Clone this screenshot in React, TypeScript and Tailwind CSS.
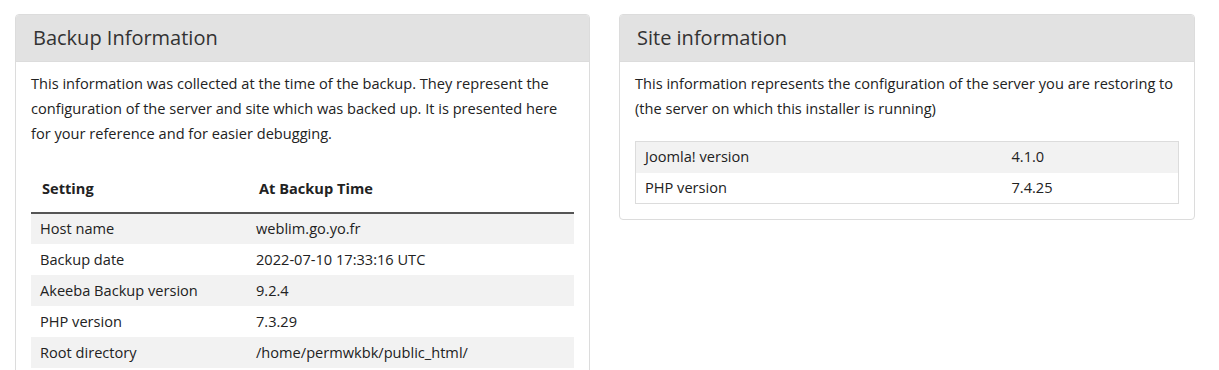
import React from "react";

const backupRows: [string, string][] = [
  ["Host name", "weblim.go.yo.fr"],
  ["Backup date", "2022-07-10 17:33:16 UTC"],
  ["Akeeba Backup version", "9.2.4"],
  ["PHP version", "7.3.29"],
  ["Root directory", "/home/permwkbk/public_html/"],
];

const siteRows: [string, string][] = [
  ["Joomla! version", "4.1.0"],
  ["PHP version", "7.4.25"],
];

const Card: React.FC<{ title: string; children: React.ReactNode }> = ({ title, children }) => (
  <div className="border border-[#dcdcdc] rounded-[4px] bg-white overflow-hidden">
    <div className="bg-[#e2e2e2] h-[47px] flex items-center px-[17px] border-b border-[#dcdcdc]">
      <h3 className="text-[20px] text-[#333] leading-none font-normal">{title}</h3>
    </div>
    <div className="px-[15px] pt-[9px] pb-[15px]">{children}</div>
  </div>
);

export default function App() {
  return (
    <div
      className="w-[1219px] h-[370px] overflow-hidden bg-white text-[#222] pt-[14px] pl-[15px] pr-[24px]"
      style={{ fontFamily: '"Open Sans", sans-serif' }}
    >
      <div className="grid grid-cols-[575px_576px] gap-[29px] items-start">
        {/* Backup Information */}
        <Card title="Backup Information">
          <p className="text-[14.6px] leading-[25px]">
            This information was collected at the time of the backup. They represent the configuration of the
            server and site which was backed up. It is presented here for your reference and for easier debugging.
          </p>
          <table className="w-[543px] mt-[21px] text-[14.6px] border-collapse">
            <thead>
              <tr className="border-b-2 border-[#555]">
                <th className="w-[225px] text-left font-bold pl-[11px] h-[46px] pb-[2px]">Setting</th>
                <th className="text-left font-bold pl-[3px] h-[46px] pb-[2px]">At Backup Time</th>
              </tr>
            </thead>
            <tbody>
              {backupRows.map(([k, v], i) => (
                <tr key={k} className={i % 2 === 0 ? "bg-[#f2f2f2]" : "bg-white"}>
                  <td className="h-[31px] pl-[9px]">{k}</td>
                  <td className="h-[31px]">{v}</td>
                </tr>
              ))}
            </tbody>
          </table>
        </Card>

        {/* Site information */}
        <Card title="Site information">
          <p className="text-[14.6px] leading-[25px]">
            This information represents the configuration of the server you are restoring to (the server on which
            this installer is running)
          </p>
          <table className="w-full mt-[20px] text-[14.6px] border-collapse border border-[#dcdcdc]">
            <tbody>
              {siteRows.map(([k, v], i) => (
                <tr key={k} className={i % 2 === 0 ? "bg-[#f2f2f2]" : "bg-white"}>
                  <td className="w-[367px] h-[31px] pl-[9px]">{k}</td>
                  <td className="h-[31px] pl-[9px]">{v}</td>
                </tr>
              ))}
            </tbody>
          </table>
        </Card>
      </div>
    </div>
  );
}
